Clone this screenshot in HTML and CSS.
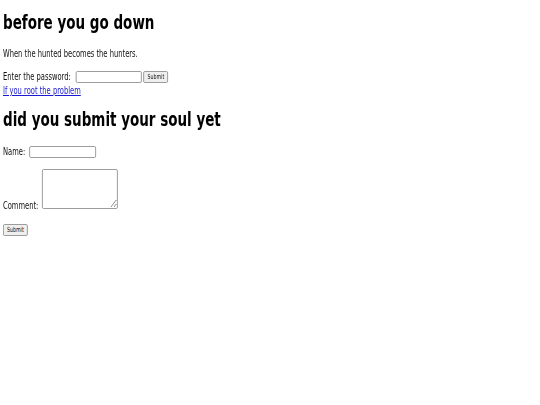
FILE: index.html
```html
<!DOCTYPE html>
<html>
<head>
<meta charset="utf-8">
<link rel="stylesheet" href="styles.css">
</head>
<body>
<div class="page">
  <h1 class="title first">before you go down</h1>
  <p class="text">When the hunted becomes the hunters.</p>
  <form class="row pw-row">
    <span class="label">Enter the password:</span>
    <input class="field pw-field" type="password">
    <button class="btn" type="button">Submit</button>
  </form>
  <a class="link" href="#">If you root the problem</a>
  <h2 class="title second">did you submit your soul yet</h2>
  <form class="c-form">
    <div class="row name-row"><span class="label">Name:</span><input class="field name-field" type="text"></div>
    <div class="row comment-row"><span class="label">Comment:</span><textarea class="area"></textarea></div>
    <div class="row submit-row"><button class="btn" type="button">Submit</button></div>
  </form>
</div>
</body>
</html>
```
FILE: styles.css
```css
html { background: #fff; }
body {
  margin: 0;
  overflow: hidden;
  font-family: "DejaVu Sans Condensed", "DejaVu Sans", sans-serif;
  font-size: 10px;
  line-height: 12px;
  color: #111;
}
.page {
  box-sizing: border-box;
  width: 480px;
  padding: 0 0 0 4px;
  transform: scaleX(0.75);
  transform-origin: 0 0;
}
.title {
  font-family: "DejaVu Sans Condensed", "DejaVu Sans", sans-serif;
  font-weight: bold;
  font-size: 20px;
  line-height: 24px;
  color: #000;
  margin: 0;
  white-space: nowrap;
}
.first { padding-top: 10px; }
.text { margin: 14px 0 0; }
.row {
  display: flex;
  align-items: center;
  margin: 0;
}
.pw-row { margin-top: 11px; height: 12px; }
.label { white-space: pre; }
.field {
  box-sizing: border-box;
  width: 88px;
  height: 12px;
  margin: 0 0 0 5px;
  border: 1px solid #8f8f8f;
  border-radius: 2px;
  padding: 0;
  font-size: 9px;
  background: #fff;
}
.pw-field { margin-left: 7px; }
.btn {
  box-sizing: border-box;
  height: 12px;
  width: 33px;
  margin: 0 0 0 2px;
  font-family: "DejaVu Sans Condensed", sans-serif;
  font-size: 7px;
  line-height: 8px;
  padding: 0;
  color: #111;
  border: 1px solid #8f8f8f;
  border-radius: 2px;
  background: #efefef;
}
.link {
  display: block;
  margin-top: 2px;
  color: #1a1ad0;
  text-decoration: underline;
}
.second { margin-top: 10px; }
.c-form { margin: 0; }
.name-row { margin-top: 15px; height: 12px; }
.name-field { width: 89px; margin-left: 5px; }
.comment-row { margin-top: 11px; align-items: flex-end; }
.area {
  box-sizing: border-box;
  width: 101px;
  height: 40px;
  margin: 0 0 3px 5px;
  border: 1px solid #8f8f8f;
  border-radius: 2px;
  padding: 0;
  background: #fff;
}
.submit-row { margin-top: 12px; }
.submit-row .btn { margin-left: 0; }
```
